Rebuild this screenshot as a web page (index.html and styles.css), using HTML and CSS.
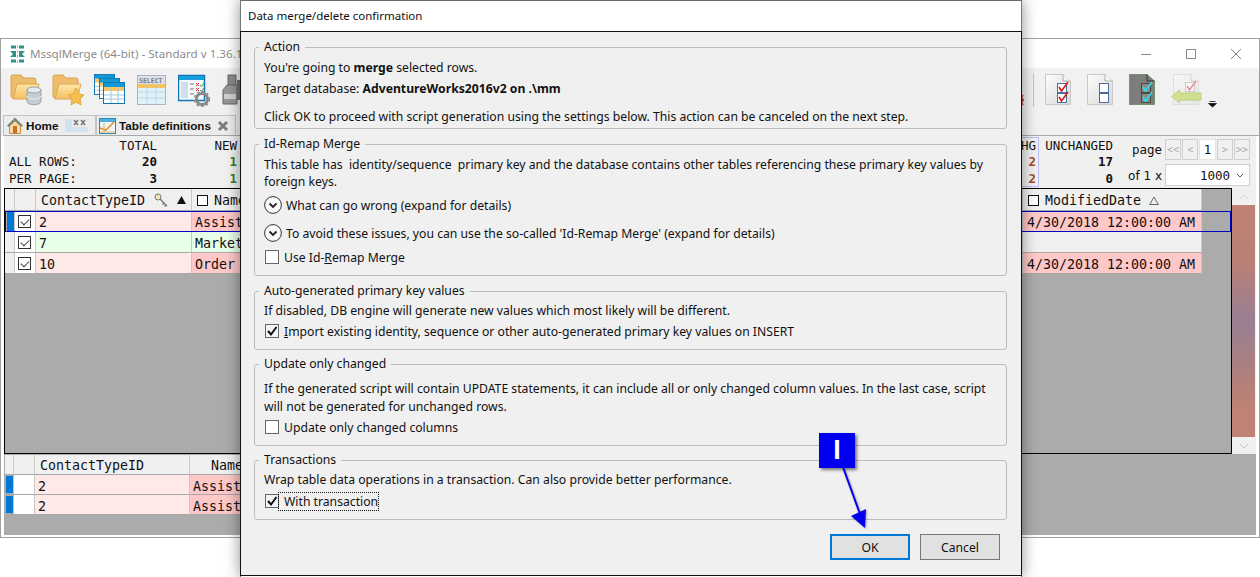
FILE: index.html

```html
<!DOCTYPE html>
<html lang="en">
<head>
  <meta charset="UTF-8">
  <title>MssqlMerge - Data merge/delete confirmation</title>
  <link rel="stylesheet" href="styles.css">
</head>
<body>
  <svg class="defs" width="0" height="0">
    <defs>
      <linearGradient id="gFolder" x1="0" y1="0" x2="0" y2="1">
        <stop offset="0" stop-color="#fde7a8"/>
        <stop offset="1" stop-color="#f4bf62"/>
      </linearGradient>
      <linearGradient id="gDoc" x1="0" y1="0" x2="1" y2="1">
        <stop offset="0" stop-color="#fdfdfd"/>
        <stop offset="1" stop-color="#d8d8d8"/>
      </linearGradient>
      <symbol id="folder" viewBox="0 0 30 26">
        <path d="M1 3 Q1 1 3 1 H11 L14 4 H24 Q26 4 26 6 V24 H3 Q1 24 1 22 Z" fill="#eebd6b" stroke="#d9a24e"/>
        <path d="M3 25 L7 10 H29 L25 25 Z" fill="url(#gFolder)" stroke="#dba650"/>
      </symbol>
      <symbol id="tbl" viewBox="0 0 22 22">
        <rect x="0.5" y="0.5" width="21" height="21" fill="#fff" stroke="#0f75b5"/>
        <rect x="1" y="1" width="20" height="4" fill="#0f9ad6"/>
        <rect x="1" y="5" width="20" height="4" fill="#f9c565"/>
        <path d="M1 13 H21 M1 17 H21 M8 5 V21 M15 5 V21" stroke="#9dc8e2"/>
      </symbol>
      <symbol id="doc" viewBox="0 0 26 32">
        <path d="M0.5 1.5 H18 L25.5 8 V31.5 H0.5 Z" fill="url(#gDoc)" stroke="#c8c8c8"/>
        <path d="M18 1.5 V8 H25.5" fill="#f4f4f4" stroke="#b0b0b0"/>
      </symbol>
    </defs>
  </svg>

  <div class="app">
    <div class="titlebar">
      <svg class="logo" width="17" height="18" viewBox="0 0 17 18">
        <path d="M2 2 H7 M10 2 H15 M2 16 H7 M10 16 H15" stroke="#2f9187" stroke-width="3"/>
        <path d="M1 6 H7 V12 H1 L4 9 Z M16 6 H10 V12 H16 L13 9 Z" fill="#2f9187"/>
        <path d="M8.5 0 V18" stroke="#8cc6bf" stroke-width="1" stroke-dasharray="3 2"/>
      </svg>
      <span class="app-title">MssqlMerge (64-bit) - Standard v 1.36.1</span>
      <div class="winbtns">
        <svg width="12" height="12" viewBox="0 0 12 12"><path d="M1 6.5 H11" stroke="#8a8a8a"/></svg>
        <svg width="12" height="12" viewBox="0 0 12 12"><rect x="1.5" y="1.5" width="9" height="9" fill="none" stroke="#8a8a8a"/></svg>
        <svg width="12" height="12" viewBox="0 0 12 12"><path d="M1 1 L11 11 M11 1 L1 11" stroke="#8a8a8a"/></svg>
      </div>
    </div>

    <div class="toolbar">
      <div class="tools">
        <svg class="tool" width="32" height="34" viewBox="0 0 32 34">
          <use href="#folder" x="0" y="1" width="30" height="26"/>
          <path d="M17 17 V28 C17 33 31 33 31 28 V17 Z" fill="#c5ccd2" stroke="#9aa2a8"/>
          <ellipse cx="24" cy="17" rx="7" ry="3" fill="#e6eaed" stroke="#9aa2a8"/>
          <path d="M17 23 C17 27 31 27 31 23" fill="none" stroke="#f2f4f5"/>
        </svg>
        <svg class="tool" width="32" height="34" viewBox="0 0 32 34">
          <use href="#folder" x="0" y="1" width="30" height="26"/>
          <path d="M24 15 L27 21 L32 22 L28 26 L29 32 L24 29 L19 32 L20 26 L16 22 L21 21 Z" fill="#f6c04e" stroke="#e3a63a"/>
        </svg>
        <svg class="tool" width="32" height="34" viewBox="0 0 32 34">
          <use href="#tbl" x="0" y="1" width="21" height="21"/>
          <use href="#tbl" x="5" y="5" width="21" height="21"/>
          <use href="#tbl" x="9" y="9" width="22" height="22"/>
        </svg>
        <svg class="tool" width="32" height="34" viewBox="0 0 32 34">
          <rect x="1.5" y="2.5" width="28" height="29" fill="#f4f8fb" stroke="#a9b4bf"/>
          <rect x="2" y="3" width="27" height="8" fill="#dde1e5"/>
          <text class="sel-text" x="3" y="10">SELECT</text>
          <rect x="2" y="11" width="27" height="4" fill="#f7c35f"/>
          <path d="M2 19 H29 M2 25 H29 M11 11 V31 M20 11 V31" stroke="#a9c6dc"/>
          <rect x="2" y="15" width="27" height="16" fill="#cfeaf8" opacity=".45"/>
        </svg>
        <svg class="tool" width="32" height="34" viewBox="0 0 32 34">
          <rect x="0.5" y="2.5" width="26" height="25" fill="#f4f8fb" stroke="#0f75b5" stroke-width="1.5"/>
          <rect x="1" y="3" width="25" height="4" fill="#15a0dc"/>
          <rect x="3" y="9" width="7" height="16" fill="#cfe0ec"/>
          <path d="M12 11 H16 M12 16 H16 M12 21 H16" stroke="#777"/>
          <path d="M18 10 L21 13 M21 10 L18 13 M18 15 L21 18 M21 15 L18 18" stroke="#d33"/>
          <path d="M22 12 L23.5 13.5 L26 10 M22 17 L23.5 18.5 L26 15" stroke="#3a9a3a" fill="none"/>
          <circle cx="24" cy="26" r="5.5" fill="none" stroke="#8a8a8a" stroke-width="3"/>
          <circle cx="24" cy="26" r="7.5" fill="none" stroke="#8a8a8a" stroke-width="1.5" stroke-dasharray="2.5 2.5"/>
        </svg>
        <svg class="tool binoc" width="20" height="32" viewBox="0 0 20 32">
          <path d="M6 1 H14 V11 H6 Z" fill="#8a8a8a" stroke="#666"/>
          <path d="M1 30 V16 L5 11 H15 V30 Z" fill="#969696" stroke="#666"/>
          <rect x="2" y="20" width="12" height="5" fill="#cfcfcf"/>
          <rect x="15" y="6" width="5" height="20" fill="#727272"/>
        </svg>
      </div>
      <div class="tools tools-right">
        <svg class="tool tool-cut" width="6" height="12" viewBox="0 0 6 12">
          <path d="M0 1 L5 6 L0 11 M5 1 L0 6 L5 11" fill="none" stroke="#b8503a" stroke-width="2.4"/>
        </svg>
        <div class="tool-sep"></div>
        <svg class="tool" width="26" height="32" viewBox="0 0 26 32">
          <use href="#doc" width="26" height="32"/>
          <rect x="12.5" y="10.5" width="9" height="9" fill="#fff" stroke="#4a6d9c"/>
          <rect x="12.5" y="20.5" width="9" height="9" fill="#fff" stroke="#4a6d9c"/>
          <path d="M14 14 L16.5 18 L23 9 M14 24 L16.5 28 L23 19" fill="none" stroke="#d81818" stroke-width="1.6"/>
        </svg>
        <svg class="tool" width="26" height="32" viewBox="0 0 26 32">
          <use href="#doc" width="26" height="32"/>
          <rect x="12.5" y="10.5" width="9" height="9" fill="#fff" stroke="#4a6d9c"/>
          <rect x="12.5" y="20.5" width="9" height="9" fill="#fff" stroke="#4a6d9c"/>
        </svg>
        <svg class="tool" width="26" height="32" viewBox="0 0 26 32">
          <path d="M0.5 1.5 H18 L25.5 8 V31.5 H0.5 Z" fill="#7d7d7d" stroke="#76926e"/>
          <path d="M18 1.5 V8 H25.5" fill="none" stroke="#333"/>
          <rect x="12.5" y="10.5" width="9" height="9" fill="#8a8a8a" stroke="#4a4a3a"/>
          <rect x="12.5" y="20.5" width="9" height="9" fill="#8a8a8a" stroke="#4a4a3a"/>
          <path d="M14 14 L16.5 18 L23 9 M14 24 L16.5 28 L23 19" fill="none" stroke="#28e0f0" stroke-width="1.6"/>
        </svg>
        <svg class="tool tool-last" width="32" height="32" viewBox="0 0 32 32">
          <g opacity=".45">
            <use href="#doc" x="2" width="26" height="32"/>
            <rect x="14.5" y="9.5" width="9" height="9" fill="#fff" stroke="#a99"/>
            <path d="M16 13 L18.5 17 L25 8" fill="none" stroke="#d81818" stroke-width="1.5"/>
          </g>
          <path d="M0.5 23.5 L8.5 17 V20 H30 V27 H8.5 V30 Z" fill="#cfe08f" stroke="#b9cf78"/>
        </svg>
        <svg class="more" width="9" height="7" viewBox="0 0 9 7"><path d="M1.5 0.5 H7.5 M0.5 2.5 H8.5 L4.5 6 Z" fill="#111" stroke="#111" stroke-width=".8"/></svg>
      </div>
    </div>

    <div class="tabs">
      <div class="tab tab-home">
        <svg width="16" height="17" viewBox="0 0 16 17">
          <path d="M8 1 L0.5 8.5 L2 9.5 L8 3.5 L14 9.5 L15.5 8.5 Z" fill="#7a8a8a" stroke="#5b6b6b" stroke-width=".6"/>
          <path d="M2.5 9 L8 4 L13.5 9 V16.5 H2.5 Z" fill="#f7dca0" stroke="#c58f4a"/>
          <rect x="6" y="9" width="4" height="7.5" fill="#c9702b"/>
        </svg>
        <span>Home</span>
        <svg class="tab-faded" width="23" height="13" viewBox="0 0 23 13">
          <rect width="23" height="13" fill="#cfe3f0"/>
          <rect x="7" y="0" width="16" height="8" fill="#ececec"/>
          <path d="M9 1 L13 6 M13 1 L9 6 M16 1 L20 6 M20 1 L16 6" stroke="#777" stroke-width="1.6"/>
        </svg>
      </div>
      <div class="tab tab-defs">
        <svg width="17" height="16" viewBox="0 0 17 16">
          <rect x="0.5" y="0.5" width="16" height="15" fill="#eef6fb" stroke="#2a86bf"/>
          <rect x="1" y="1" width="15" height="3" fill="#4fb0dd"/>
          <path d="M1 10 L7 12 L15 4" fill="none" stroke="#e58f2b" stroke-width="1.6"/>
          <path d="M1 14 H16 M5 5 V15" stroke="#e0b060"/>
        </svg>
        <span>Table definitions</span>
        <svg class="tab-close" width="12" height="12" viewBox="0 0 12 12"><path d="M2 2 L10 10 M10 2 L2 10" stroke="#7d7d7d" stroke-width="3"/></svg>
      </div>
      <div class="tab-rest"></div>
    </div>

    <div class="content">
      <div class="stats">
        <div class="stats-left">
          <span></span><span class="num-head">TOTAL</span><span class="num-head">NEW</span>
          <span>ALL ROWS:</span><b class="num">20</b><b class="num num-new">1</b>
          <span>PER PAGE:</span><b class="num">3</b><b class="num num-new">1</b>
        </div>
        <div class="stats-right">
          <div class="chg-col">
            <span>HG</span><b class="num num-chg">2</b><b class="num num-chg">2</b>
          </div>
          <div class="unchg-col">
            <span>UNCHANGED</span><b class="num">17</b><b class="num">0</b>
          </div>
          <div class="pager-labels">
            <span class="page-label">page</span>
            <span class="of-label">of 1 x</span>
          </div>
          <div class="pager">
            <div class="pager-btns">
              <span class="pbtn">&lt;&lt;</span>
              <span class="pbtn">&lt;</span>
              <span class="pbtn pbtn-cur">1</span>
              <span class="pbtn">&gt;</span>
              <span class="pbtn">&gt;&gt;</span>
            </div>
            <div class="combo">
              <span>1000</span>
              <svg width="8" height="5" viewBox="0 0 8 5"><path d="M1 1 L4 4 L7 1" fill="none" stroke="#555"/></svg>
            </div>
          </div>
        </div>
      </div>

      <div class="main-pane">
        <div class="grid">
          <div class="row row-head">
            <div class="c-mark"></div>
            <div class="c-check"></div>
            <div class="c-id">
              <span>ContactTypeID</span>
              <svg class="key" width="14" height="14" viewBox="0 0 14 14">
                <circle cx="4" cy="4" r="3" fill="#f0e6b8" stroke="#777"/>
                <path d="M6 6 L13 13 M10 10 L8.5 11.5 M12 12 L10.5 13.5" stroke="#777" stroke-width="1.4"/>
              </svg>
              <svg class="sort" width="9" height="8" viewBox="0 0 9 8"><path d="M4.5 0 L9 8 H0 Z" fill="#111"/></svg>
            </div>
            <div class="c-name">
              <span class="hbox"></span><span>Name</span>
            </div>
            <div class="c-date">
              <span class="hbox"></span><span>ModifiedDate</span>
              <svg class="sort-open" width="10" height="9" viewBox="0 0 10 9"><path d="M5 1 L9.3 8.5 H0.7 Z" fill="none" stroke="#666"/></svg>
            </div>
            <div class="c-fill"></div>
          </div>
          <div class="row row-sel">
            <div class="c-mark mark-on"></div>
            <div class="c-check"><span class="tick"></span></div>
            <div class="c-id bg-del">2</div>
            <div class="c-name bg-del2">Assist</div>
            <div class="c-date bg-del2">4/30/2018 12:00:00 AM</div>
            <div class="c-fill"></div>
          </div>
          <div class="row">
            <div class="c-mark"></div>
            <div class="c-check"><span class="tick"></span></div>
            <div class="c-id bg-new">7</div>
            <div class="c-name bg-new">Market</div>
            <div class="c-date bg-none"></div>
            <div class="c-fill"></div>
          </div>
          <div class="row">
            <div class="c-mark"></div>
            <div class="c-check"><span class="tick"></span></div>
            <div class="c-id bg-del">10</div>
            <div class="c-name bg-del2">Order</div>
            <div class="c-date bg-del2">4/30/2018 12:00:00 AM</div>
            <div class="c-fill"></div>
          </div>
        </div>
        <div class="scrollbar">
          <div class="sb-btn">
            <svg width="10" height="6" viewBox="0 0 10 6"><path d="M1 5 L5 1 L9 5" fill="none" stroke="#d0d0d0"/></svg>
          </div>
          <div class="sb-thumb"></div>
          <div class="sb-btn">
            <svg width="10" height="6" viewBox="0 0 10 6"><path d="M1 1 L5 5 L9 1" fill="none" stroke="#c4c4c4"/></svg>
          </div>
        </div>
      </div>

      <div class="lower-pane">
        <div class="row row-head row-low">
          <div class="c-mark"></div>
          <div class="c-check"></div>
          <div class="c-id">ContactTypeID</div>
          <div class="c-name low-name">Name</div>
        </div>
        <div class="row row-low">
          <div class="c-mark mark-low"></div>
          <div class="c-check"></div>
          <div class="c-id bg-del">2</div>
          <div class="c-name bg-del2">Assist</div>
        </div>
        <div class="row row-low">
          <div class="c-mark mark-low"></div>
          <div class="c-check"></div>
          <div class="c-id bg-del">2</div>
          <div class="c-name bg-del2">Assist</div>
        </div>
      </div>
    </div>
  </div>

  <div class="dialog">
    <div class="dialog-title">Data merge/delete confirmation</div>
    <div class="dialog-body">
      <fieldset class="group g-action">
        <legend>Action</legend>
        <div class="line mt4">You're going to <b>merge</b> selected rows.</div>
        <div class="line mt5">Target database: <b>AdventureWorks2016v2 on .\mm</b></div>
        <div class="line mt12">Click OK to proceed with script generation using the settings below. This action can be canceled on the next step.</div>
      </fieldset>

      <fieldset class="group g-remap">
        <legend>Id-Remap Merge</legend>
        <div class="line mt4">This table has&nbsp; identity/sequence&nbsp; primary key and the database contains other tables referencing these primary key values by</div>
        <div class="line mt1">foreign keys.</div>
        <div class="expander mt6">
          <svg width="18" height="18" viewBox="0 0 18 18"><circle cx="9" cy="9" r="8.4" fill="#fafafa" stroke="#333"/><path d="M5.5 7.5 L9 11 L12.5 7.5" fill="none" stroke="#222" stroke-width="1.8"/></svg>
          <span>What can go wrong (expand for details)</span>
        </div>
        <div class="expander mt8">
          <svg width="18" height="18" viewBox="0 0 18 18"><circle cx="9" cy="9" r="8.4" fill="#fafafa" stroke="#333"/><path d="M5.5 7.5 L9 11 L12.5 7.5" fill="none" stroke="#222" stroke-width="1.8"/></svg>
          <span>To avoid these issues, you can use the so-called 'Id-Remap Merge' (expand for details)</span>
        </div>
        <label class="check mt6"><span class="box"></span><span>Use Id-<u>R</u>emap Merge</span></label>
      </fieldset>

      <fieldset class="group g-auto">
        <legend>Auto-generated primary key values</legend>
        <div class="line mt3">If disabled, DB engine will generate new values which most likely will be different.</div>
        <label class="check mt5">
          <span class="box box-on"><svg width="12" height="12" viewBox="0 0 12 12"><path d="M2 6 L5 9.5 L10.5 2" fill="none" stroke="#111" stroke-width="2"/></svg></span>
          <span><u>I</u>mport existing identity, sequence or other auto-generated primary key values on INSERT</span>
        </label>
      </fieldset>

      <fieldset class="group g-update">
        <legend>Update only changed</legend>
        <div class="line mt8">If the generated script will contain UPDATE statements, it can include all or only changed column values. In the last case, script</div>
        <div class="line mt2">will not be generated for unchanged rows.</div>
        <label class="check mt5"><span class="box"></span><span>Update only changed columns</span></label>
      </fieldset>

      <fieldset class="group g-trans">
        <legend>Transactions</legend>
        <div class="line mt3">Wrap table data operations in a transaction. Can also provide better performance.</div>
        <label class="check mt6">
          <span class="box box-on"><svg width="12" height="12" viewBox="0 0 12 12"><path d="M2 6 L5 9.5 L10.5 2" fill="none" stroke="#111" stroke-width="2"/></svg></span>
          <span class="focused">With transaction</span>
        </label>
      </fieldset>

      <div class="dialog-btns">
        <button class="btn btn-default">OK</button>
        <button class="btn">Cancel</button>
      </div>
    </div>
  </div>

  <div class="callout">I</div>
  <svg class="callout-arrow" width="40" height="66" viewBox="0 0 40 66">
    <path d="M8 1 L25 48" stroke="#0000ee" stroke-width="2"/>
    <path d="M16 50 L31 43 L30 62 Z" fill="#0000ee"/>
  </svg>
</body>
</html>
```

FILE: styles.css

```css
* { box-sizing: border-box; }
html, body { margin: 0; padding: 0; }
body { position: relative; width: 1260px; height: 577px; overflow: hidden; background: #fff; font-family: "Noto Sans", "Open Sans", sans-serif; font-size: 12.2px; color: #111; }
.defs { position: absolute; }

/* background window */
.app { position: absolute; left: 0; top: 38px; width: 1260px; height: 500px; border: 1px solid #a0a0a0; background: #fff; display: flex; flex-direction: column; }
.titlebar { height: 29px; display: flex; align-items: center; padding-left: 8px; background: #fff; }
.logo { margin-right: 4px; }
.app-title { color: #8c8c8c; font-size: 11.6px; white-space: nowrap; }
.winbtns { margin-left: auto; display: flex; gap: 33px; padding-right: 17px; }
.toolbar { height: 47px; background: #f1f1f1; display: flex; justify-content: space-between; padding-top: 5px; }
.tools { display: flex; gap: 10px; padding-left: 9px; align-items: flex-start; }
.tool { flex: none; }
.binoc { margin: 1px 0 0 2px; }
.sel-text { font-family: "DejaVu Sans Mono", monospace; font-size: 6.5px; font-weight: bold; fill: #777; }
.tools-right { gap: 16px; padding-left: 0; margin-right: 42px; }
.tool-cut { margin: 21px -7px 0 0; }
.tool-sep { width: 1px; height: 34px; background: #c4c4c4; margin-right: -5px; }
.tool-last { margin-right: -1px; }
.more { align-self: flex-end; margin: 0 0 7px -10px; }
.tabs { height: 21px; display: flex; background: #f1f1f1; padding-left: 2px; }
.tab { height: 21px; display: flex; align-items: center; gap: 3px; background: #ececec; border: 1px solid #c4c4c4; border-bottom: 1px solid #a9a9a9; font-family: "Liberation Sans", sans-serif; font-weight: bold; font-size: 11.7px; color: #111; padding-left: 3px; white-space: nowrap; }
.tab-home { width: 93px; }
.tab-faded { margin-left: 4px; }
.tab-defs { width: 140px; padding-left: 2px; }
.tab-close { margin-left: 3px; }
.tab-rest { flex: 1; border-bottom: 1px solid #a9a9a9; }

.content { flex: 1; display: flex; flex-direction: column; padding: 0 3px 2px; background: #fff; font-family: "DejaVu Sans Mono", monospace; }

/* counters above the grid */
.stats { height: 52px; background: #f0f0f0; display: flex; justify-content: space-between; font-size: 12.5px; padding: 2px 6px 0 5px; }
.stats-left { display: grid; grid-template-columns: 70px 78px 80px; grid-template-rows: 16px 16px 17px; line-height: 16px; align-content: start; }
.stats-left > :nth-child(n+7) { align-self: end; }
.num-head { text-align: right; }
.num { text-align: right; display: block; }
.num-new { color: #2f7d2f; }
.num-chg { color: #a04a20; text-align: center; }
.stats-right { display: flex; }
.chg-col { width: 20px; height: 50px; margin-top: -1px; border: 1px solid #b9bff0; display: flex; flex-direction: column; align-items: flex-end; line-height: 16px; padding-right: 2px; white-space: nowrap; }
.unchg-col { width: 74px; display: flex; flex-direction: column; text-align: right; line-height: 16px; }
.chg-col b:last-child, .unchg-col b:last-child { margin-top: 1px; }
.pager-labels { width: 52px; display: flex; flex-direction: column; align-items: flex-end; padding-right: 3px; }
.page-label { margin-top: 4px; line-height: 16px; }
.of-label { margin-top: 10px; line-height: 16px; font-family: "DejaVu Sans", sans-serif; font-size: 12px; }
.pager { width: 85px; padding-top: 1px; display: flex; flex-direction: column; gap: 4px; }
.pager-btns { display: flex; gap: 1px; height: 21px; }
.pbtn { flex: 1; border: 1px solid #cfcfcf; background: #f0f0f0; color: #a8a8a8; font-size: 10px; line-height: 19px; text-align: center; }
.pbtn-cur { background: #fff; color: #111; font-size: 12.5px; border-color: #e4e4e4; }
.combo { height: 22px; background: #fff; border: 1px solid #d0d0d0; display: flex; align-items: center; justify-content: flex-end; gap: 6px; padding-right: 5px; font-size: 12.5px; }

/* grids */
.main-pane { height: 266px; display: flex; }
.grid { width: 1228px; border: 1px solid #000; background: #ababab; font-size: 13.3px; }
.row { height: 21px; display: flex; line-height: 23px; }
.row > div { border-bottom: 1px solid #a8a8a8; border-right: 1px solid #c8c8c8; white-space: nowrap; overflow: hidden; }
.row-head { height: 22px; background: #f0f0f0; color: #111; }
.row-head > div { height: 22px; display: flex; align-items: center; padding-top: 1px; }
.row-sel { outline: 1px solid #0000c0; outline-offset: -1px; position: relative; }
.row-sel > div { border-bottom-color: transparent; }
.c-mark { width: 10px; background: #f0f0f0; }
.c-check { width: 21px; background: #fff; display: flex; align-items: center; padding-left: 3px; }
.row-head .c-check { background: #f0f0f0; }
.c-id { width: 156px; padding-left: 3px; }
.row-head .c-id { padding-left: 5px; }
.c-name { flex: 1; padding-left: 3px; }
.row-head .c-name { padding-left: 5px; }
.c-date { width: 179px; padding-left: 4px; }
.row-head .c-date { padding-left: 5px; }
.row > .c-fill { width: 29px; background: #ababab; border: 0; }
.mark-on { width: 8px; background: #0078d7; margin: 1px 0 1px 2px; height: 19px; }
.key { margin-left: 9px; }
.sort { margin-left: 9px; }
.sort-open { margin-left: 8px; }
.hbox { width: 11px; height: 11px; border: 1px solid #111; background: #fff; margin-right: 6px; flex: none; }
.tick { width: 13px; height: 13px; border: 1px solid #333; display: block; position: relative; }
.tick::after { content: ""; position: absolute; left: 2px; top: 1px; width: 7px; height: 4px; border-left: 1px solid #444; border-bottom: 1px solid #444; transform: rotate(-45deg) translate(-1px, 1px); }
.bg-del { background: #ffe8e8; }
.bg-del2 { background: #ffc8c8; }
.bg-new { background: #e8ffe8; }
.bg-none { background: #f0f0f0; }

.scrollbar { width: 24px; background: #f0f0f0; display: flex; flex-direction: column; }
.sb-btn { height: 17px; display: flex; align-items: center; justify-content: center; }
.sb-thumb { flex: 1; margin-right: 1px; background: linear-gradient(#c08274 0%, #b98076 25%, #997f94 50%, #a98080 68%, #c08274 88%, #c08274 100%); }

.lower-pane { flex: 1; background: #ababab; padding: 1px 0 0 1px; font-size: 13.3px; }
.row-low { height: 20px; width: 1015px; line-height: 23px; }
.row-low.row-head > div { height: 20px; padding-top: 2px; }
.row-low .c-mark { width: 9px; }
.row-low .c-id { width: 155px; padding-left: 3px; }
.row-low.row-head .c-id { padding-left: 5px; }
.low-name.c-name { padding-left: 21px; }
.row-low .mark-low { width: 8px; background: #0078d7; margin: 1px 0 1px 1px; height: 18px; }

/* dialog */
.dialog { position: absolute; left: 240px; top: 0; width: 782px; height: 577px; background: #fff; border-top: 1px solid #6a6a6a; border-left: 1px solid #777; border-right: 1px solid #777; box-shadow: 0 0 14px rgba(0,0,0,.45); display: flex; flex-direction: column; }
.dialog-title { height: 30px; line-height: 30px; padding-left: 7px; font-size: 11.5px; color: #111; }
.dialog-body { flex: 1; margin: 0 -1px 1px; background: #f0f0f0; border: 1px solid #111; padding: 7px 14px 0 13px; display: flex; flex-direction: column; }
.group { margin: 0; min-width: 0; border: 1px solid #bcbcbc; border-radius: 3px; padding: 0 9px; }
.group legend { padding: 0 5px; margin-left: -5px; line-height: 16px; }
.g-action { height: 90px; }
.g-remap { height: 140px; margin-top: 7px; }
.g-auto { height: 67px; margin-top: 7px; }
.g-update { height: 90px; margin-top: 6px; }
.g-trans { height: 68px; margin-top: 6px; }
.line { line-height: 18px; margin-bottom: -2px; white-space: nowrap; }
.mt1 { margin-top: 1px; }
.mt2 { margin-top: 2px; }
.mt3 { margin-top: 3px; }
.mt4 { margin-top: 4px; }
.mt5 { margin-top: 5px; }
.mt6 { margin-top: 6px; }
.mt8 { margin-top: 8px; }
.mt12 { margin-top: 12px; }
.expander { height: 20px; display: flex; align-items: center; gap: 4px; white-space: nowrap; }
.check { height: 16px; display: flex; align-items: center; gap: 5px; white-space: nowrap; padding-left: 1px; }
.box { width: 14px; height: 14px; border: 1px solid #666; background: #fff; flex: none; display: flex; align-items: center; justify-content: center; }
.box-on { background: #f4f4f4; }
.focused { outline: 1px dotted #111; padding-left: 5px; margin-left: -5px; }
.dialog-btns { display: flex; justify-content: flex-end; gap: 10px; margin-top: 14px; padding-right: 7px; }
.btn { width: 80px; height: 26px; font-family: inherit; font-size: 12.2px; color: #111; background: #e1e1e1; border: 1px solid #777; padding: 0; }
.btn-default { border: 2px solid #0078d7; }

/* annotation on top of the dialog */
.callout { position: absolute; left: 819px; top: 433px; width: 36px; height: 35px; background: #0000ee; color: #fff; font-family: "Liberation Sans", sans-serif; font-weight: bold; font-size: 27px; line-height: 35px; text-align: center; box-shadow: 2px 2px 3px rgba(0,0,0,.5); }
.callout-arrow { position: absolute; left: 835px; top: 466px; filter: drop-shadow(1px 1px 1px rgba(0,0,0,.35)); }
```
